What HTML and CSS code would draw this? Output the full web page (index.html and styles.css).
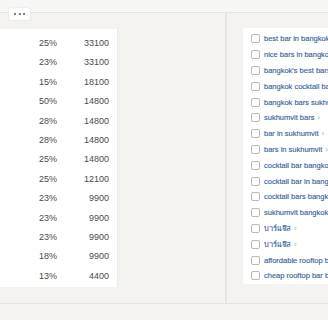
FILE: index.html
```html
<!DOCTYPE html>
<html>
<head>
<meta charset="utf-8">
<link rel="stylesheet" href="styles.css">
</head>
<body>
<div class="app">
    <header class="topbar">
        <button class="more-btn" type="button"><i></i><i></i><i></i></button>
    </header>

    <div class="workspace">
        <section class="left-pane">
            <div class="stats">
                <div class="stat-row"><span>25%</span><span>33100</span></div>
                <div class="stat-row"><span>23%</span><span>33100</span></div>
                <div class="stat-row"><span>15%</span><span>18100</span></div>
                <div class="stat-row"><span>50%</span><span>14800</span></div>
                <div class="stat-row"><span>28%</span><span>14800</span></div>
                <div class="stat-row"><span>28%</span><span>14800</span></div>
                <div class="stat-row"><span>25%</span><span>14800</span></div>
                <div class="stat-row"><span>25%</span><span>12100</span></div>
                <div class="stat-row"><span>23%</span><span>9900</span></div>
                <div class="stat-row"><span>23%</span><span>9900</span></div>
                <div class="stat-row"><span>23%</span><span>9900</span></div>
                <div class="stat-row"><span>18%</span><span>9900</span></div>
                <div class="stat-row"><span>13%</span><span>4400</span></div>
            </div>
        </section>

        <div class="divider"></div>

        <section class="right-pane">
            <ul class="keywords">
                <li><span class="check"></span><span class="kw">best bar in bangkok</span></li>
                <li><span class="check"></span><span class="kw">nice bars in bangkok</span></li>
                <li><span class="check"></span><span class="kw">bangkok's best bars</span></li>
                <li><span class="check"></span><span class="kw">bangkok cocktail bars</span></li>
                <li><span class="check"></span><span class="kw">bangkok bars sukhumvit</span></li>
                <li><span class="check"></span><span class="kw">sukhumvit bars</span><span class="chev">&rsaquo;</span></li>
                <li><span class="check"></span><span class="kw">bar in sukhumvit</span><span class="chev">&rsaquo;</span></li>
                <li><span class="check"></span><span class="kw">bars in sukhumvit</span><span class="chev">&rsaquo;</span></li>
                <li><span class="check"></span><span class="kw">cocktail bar bangkok</span></li>
                <li><span class="check"></span><span class="kw">cocktail bar in bangkok</span></li>
                <li><span class="check"></span><span class="kw">cocktail bars bangkok</span></li>
                <li><span class="check"></span><span class="kw">sukhumvit bangkok bars</span></li>
                <li><span class="check"></span><span class="kw">บาร์แจ๊ส</span><span class="chev">&rsaquo;</span></li>
                <li><span class="check"></span><span class="kw">บาร์แจ๊ส</span><span class="chev">&rsaquo;</span></li>
                <li><span class="check"></span><span class="kw">affordable rooftop bar bangkok</span></li>
                <li><span class="check"></span><span class="kw">cheap rooftop bar bangkok</span></li>
            </ul>
        </section>
    </div>

    <footer class="bottombar"></footer>
</div>
</body>
</html>
```

FILE: styles.css
```css
html, body {
    margin: 0;
    padding: 0;
    width: 100%;
    height: 100%;
    overflow: hidden;
}

body {
    background: #f4f3ef;
    font-family: "Liberation Sans", Arial, sans-serif;
}

.app {
    display: flex;
    flex-direction: column;
    height: 100%;
}

.topbar {
    height: 12px;
    background: #f7f7f5;
    border-bottom: 1px solid #e4e3df;
    position: relative;
}

.more-btn {
    position: absolute;
    left: 9px;
    top: 8px;
    width: 21px;
    height: 12px;
    padding: 0;
    border: none;
    border-radius: 2px;
    background: #fff;
    box-shadow: 0 0 2px rgba(0, 0, 0, 0.12);
    display: flex;
    align-items: center;
    justify-content: center;
    gap: 2.5px;
}

.more-btn i {
    width: 2px;
    height: 2px;
    border-radius: 50%;
    background: #555;
}

.workspace {
    display: flex;
    height: 290px;
}

.left-pane {
    width: 225px;
    padding-top: 16px;
}

.stats {
    width: 117px;
    height: 253px;
    padding-top: 5px;
    background: #fff;
    border-right: 1px solid #ebeae6;
}

.stat-row {
    display: grid;
    grid-template-columns: 57px 52px;
    height: 19.4px;
    line-height: 19.4px;
    font-size: 9px;
    color: #4a4a4a;
    text-align: right;
}

.divider {
    width: 2px;
    background: #e6e5e1;
}

.right-pane {
    flex: 1;
    padding: 15px 0 0 16px;
    overflow: hidden;
}

.keywords {
    list-style: none;
    margin: 0;
    padding: 3px 0 3px 8px;
    height: 250px;
    background: #fff;
    white-space: nowrap;
}

.keywords li {
    display: flex;
    align-items: center;
    height: 15.8px;
}

.check {
    flex: none;
    width: 7px;
    height: 7px;
    border: 1px solid #b9b9b9;
    border-radius: 2px;
    margin-right: 4px;
}

.kw {
    font-size: 7.5px;
    color: #3a64a0;
    -webkit-text-stroke: 0.15px #3a64a0;
}

.chev {
    margin-left: 3px;
    font-size: 8px;
    color: #a5adb8;
}

.bottombar {
    flex: 1;
    border-top: 1px solid #e4e3df;
}
```
